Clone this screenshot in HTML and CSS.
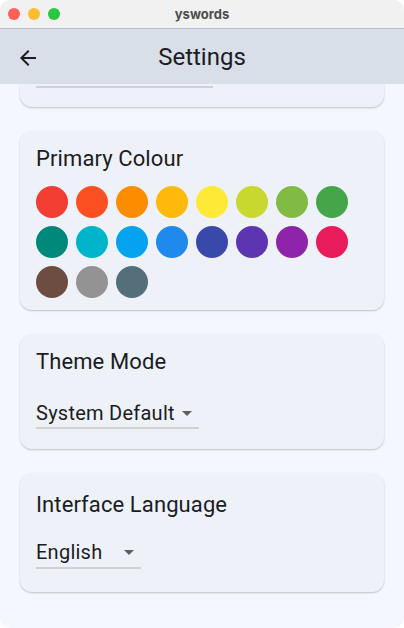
FILE: index.html
```html
<!DOCTYPE html>
<html lang="en">
<head>
<meta charset="utf-8">
<title>yswords</title>
<link rel="stylesheet" href="styles.css">
</head>
<body>
<div class="window">
  <div class="titlebar">
    <div class="lights">
      <span class="light red"></span>
      <span class="light yellow"></span>
      <span class="light green"></span>
    </div>
    <div class="wtitle">yswords</div>
    <div></div>
  </div>
  <header class="appbar">
    <svg class="back" viewBox="0 0 24 24" width="24" height="24"><path d="M20 11H7.83l5.59-5.59L12 4l-8 8 8 8 1.41-1.41L7.83 13H20v-2z" fill="#1c1c1e"/></svg>
    <h1 class="apptitle">Settings</h1>
    <div></div>
  </header>
  <main class="content">
    <section class="card card-partial">
      <div class="line partial-line"></div>
    </section>
    <section class="card card-colours">
      <h2 class="card-title">Primary Colour</h2>
      <div class="swatches">
        <span class="swatch c-red"></span>
        <span class="swatch c-deeporange"></span>
        <span class="swatch c-orange"></span>
        <span class="swatch c-amber"></span>
        <span class="swatch c-yellow"></span>
        <span class="swatch c-lime"></span>
        <span class="swatch c-lightgreen"></span>
        <span class="swatch c-green"></span>
        <span class="swatch c-teal"></span>
        <span class="swatch c-cyan"></span>
        <span class="swatch c-lightblue"></span>
        <span class="swatch c-blue"></span>
        <span class="swatch c-indigo"></span>
        <span class="swatch c-deeppurple"></span>
        <span class="swatch c-purple"></span>
        <span class="swatch c-pink"></span>
        <span class="swatch c-brown"></span>
        <span class="swatch c-grey"></span>
        <span class="swatch c-bluegrey"></span>
      </div>
    </section>
    <section class="card card-theme">
      <h2 class="card-title">Theme Mode</h2>
      <div class="dropdown">
        <div class="dd-row">
          <span class="dd-text">System Default</span>
          <svg class="dd-icon" viewBox="0 0 24 24" width="24" height="24"><path d="M7 10l5 5 5-5z" fill="#5f5f63"/></svg>
        </div>
        <div class="line"></div>
      </div>
    </section>
    <section class="card card-lang">
      <h2 class="card-title">Interface Language</h2>
      <div class="dropdown">
        <div class="dd-row">
          <span class="dd-text dd-text-lang">English</span>
          <svg class="dd-icon" viewBox="0 0 24 24" width="24" height="24"><path d="M7 10l5 5 5-5z" fill="#5f5f63"/></svg>
        </div>
        <div class="line"></div>
      </div>
    </section>
  </main>
</div>
</body>
</html>
```
FILE: styles.css
```css
html {
  background: #ffffff;
}
body {
  margin: 0;
  font-family: Roboto, "Noto Sans", sans-serif;
  color: #1b1c1f;
}
.window {
  width: 404px;
  height: 628px;
  border-radius: 10px;
  overflow: hidden;
  background: #f4f7fd;
  display: flex;
  flex-direction: column;
}
.titlebar {
  height: 28px;
  flex: none;
  background: #f1f1f1;
  border-bottom: 1px solid #b9c0cb;
  display: grid;
  grid-template-columns: 1fr auto 1fr;
  align-items: center;
}
.lights {
  display: flex;
  gap: 8px;
  padding-left: 8px;
}
.light {
  width: 12px;
  height: 12px;
  border-radius: 50%;
}
.red { background: #fe5f57; }
.yellow { background: #febc2e; }
.green { background: #28c840; }
.wtitle {
  font-family: Inter, Roboto, sans-serif;
  font-weight: 700;
  font-size: 13px;
  color: #4c4c4c;
}
.appbar {
  height: 55px;
  flex: none;
  background: #d8dfe8;
  display: grid;
  grid-template-columns: 56px 1fr 56px;
  align-items: center;
}
.back {
  margin-left: 16px;
  margin-top: 2px;
  display: block;
}
.apptitle {
  margin: 0;
  text-align: center;
  font-weight: 400;
  font-size: 24px;
  line-height: 28px;
  color: #1b1c1f;
}
.content {
  flex: 1;
  overflow: hidden;
  padding: 0 20px;
  display: flex;
  flex-direction: column;
  gap: 24px;
}
.card {
  background: #eef1f8;
  border-radius: 12px;
  box-shadow: 0 1px 2px rgba(0, 0, 0, 0.22);
  padding: 16px;
}
.card-partial {
  border-radius: 0 0 12px 12px;
  padding: 2px 16px 19px;
}
.line {
  height: 2px;
  background: #cfd1d6;
}
.partial-line {
  width: 177px;
}
.card-title {
  margin: 0;
  font-weight: 400;
  font-size: 22px;
  line-height: 24px;
  letter-spacing: 0.1px;
  color: #1b1c1f;
}
.card-colours {
  padding: 16px 16px 12px;
}
.card-colours .card-title {
  margin-bottom: 15px;
}
.swatches {
  display: grid;
  grid-template-columns: repeat(8, 32px);
  gap: 8px;
}
.swatch {
  width: 32px;
  height: 32px;
  border-radius: 50%;
}
.c-red { background: #f23d33; }
.c-deeporange { background: #fd5022; }
.c-orange { background: #fe8c00; }
.c-amber { background: #feb90a; }
.c-yellow { background: #fee936; }
.c-lime { background: #c9d82f; }
.c-lightgreen { background: #82bb44; }
.c-green { background: #45a649; }
.c-teal { background: #00897b; }
.c-cyan { background: #00b4cc; }
.c-lightblue { background: #03a3ef; }
.c-blue { background: #2089ec; }
.c-indigo { background: #3949ab; }
.c-deeppurple { background: #5e35b1; }
.c-purple { background: #8e24aa; }
.c-pink { background: #e91c5b; }
.c-brown { background: #6d4c41; }
.c-grey { background: #939393; }
.c-bluegrey { background: #546e7a; }
.card-theme {
  padding: 16px 16px 20px;
}
.card-lang {
  padding: 20px 16px 23px;
}
.dropdown {
  display: flex;
  flex-direction: column;
  width: max-content;
}
.card-theme .dropdown {
  margin-top: 27px;
}
.card-lang .dropdown {
  margin-top: 23px;
}
.dd-row {
  display: flex;
  align-items: center;
  height: 24px;
  margin-bottom: 2px;
}
.card-lang .dd-row {
  margin-bottom: 3px;
}
.dd-text {
  font-size: 20px;
  line-height: 24px;
  letter-spacing: 0.25px;
  color: #1b1c1f;
}
.dd-text-lang {
  width: 81px;
}
.dd-icon {
  display: block;
  flex: none;
}
```
